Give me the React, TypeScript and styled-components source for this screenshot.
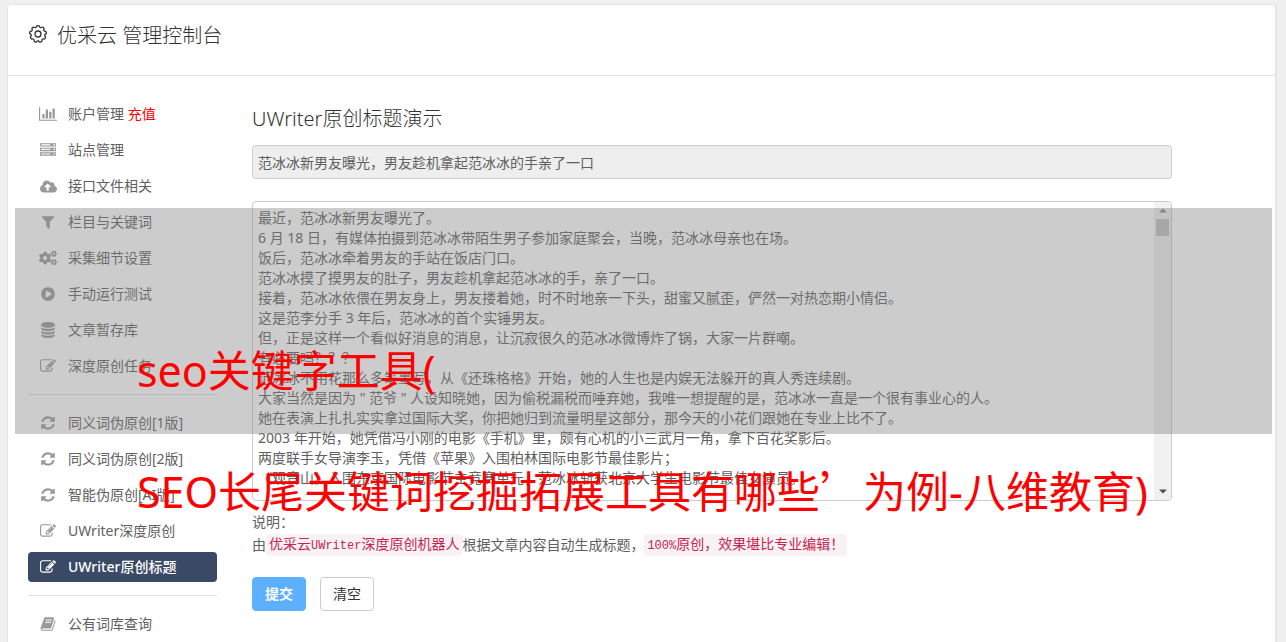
import React from 'react';
import styled, { createGlobalStyle, css } from 'styled-components';
import { FaCloudUploadAlt, FaCogs } from 'react-icons/fa';

const GlobalStyle = createGlobalStyle`
  * { box-sizing: border-box; }
  html { scrollbar-width: none; }
  body {
    margin: 0;
    background: #f0f0f0;
    color: #606060;
    font: 14px/20px "Noto Sans", "Noto Sans CJK SC", sans-serif;
  }
  button, input, textarea { font: inherit; color: inherit; margin: 0; }
`;

const Page = styled.div`
  position: relative;
  min-height: 100vh;
  padding: 4px 10px 0 7px;
  overflow: hidden;
`;

const Card = styled.div`
  background: #fff;
  border: 1px solid #e5e5e5;
  border-radius: 4px;
  box-shadow: 1px 0 0 #e8e8e8;
`;

const Header = styled.header`
  display: flex;
  align-items: flex-start;
  gap: 9px;
  height: 71px;
  padding: 16px 20px;
  border-bottom: 1px solid #e2e2e2;
  color: #333;
  svg { margin-top: 3px; }
`;

const PageTitle = styled.h1`
  margin: 0;
  font-size: 20px;
  line-height: 30px;
  font-weight: 300;
`;

const Body = styled.div`
  display: flex;
  gap: 35px;
  padding: 23px 103px 20px 20px;
`;

const Sidebar = styled.nav`
  flex: 0 0 189px;
`;

const Menu = styled.ul`
  display: flex;
  flex-direction: column;
  gap: 6px;
  margin: 0;
  padding: 0;
  list-style: none;
`;

const Divider = styled.hr`
  height: 1px;
  margin: 13px 0;
  border: 0;
  background: #ddd;
`;

const MenuLink = styled.a<{ $active?: boolean }>`
  display: flex;
  align-items: center;
  height: 30px;
  padding-left: 10px;
  border-radius: 4px;
  color: #606060;
  text-decoration: none;
  white-space: pre;
  ${p => p.$active && css`
    background: #3a4a66;
    color: #fff;
    font-weight: 500;
  `}
`;

const IconBox = styled.span<{ $active?: boolean }>`
  display: flex;
  justify-content: center;
  width: 20px;
  margin-right: 10px;
  color: ${p => (p.$active ? '#fff' : '#999')};
`;

const Recharge = styled.span`
  color: #f00;
`;

const Main = styled.main`
  flex: 1;
  min-width: 0;
  padding-top: 5px;
`;

const SectionTitle = styled.h2`
  margin: 0 0 11px;
  font-size: 20px;
  line-height: 30px;
  font-weight: 300;
  color: #333;
`;

const TitleInput = styled.input`
  display: block;
  width: 100%;
  height: 34px;
  padding: 0 5px;
  border: 1px solid #ccc;
  border-radius: 4px;
  background: #eee;
`;

const ArticleFrame = styled.div`
  display: flex;
  height: 300px;
  margin: 22px 0 9px;
  border: 1px solid #ccc;
  border-radius: 4px;
  overflow: hidden;
`;

const Article = styled.textarea`
  flex: 1;
  min-width: 0;
  padding: 6px 5px;
  border: 0;
  outline: 0;
  resize: none;
  overflow: hidden;
  background: transparent;
`;

const ScrollTrack = styled.div`
  display: flex;
  flex-direction: column;
  align-items: center;
  width: 17px;
  background: #f1f1f1;
`;

const ScrollArrow = styled.svg`
  margin: 6px 0;
`;

const ScrollThumb = styled.div`
  width: 13px;
  height: 17px;
  margin-bottom: auto;
  background: #c1c1c1;
`;

const Note = styled.p`
  display: flex;
  align-items: center;
  height: 23px;
  margin: 0;
  white-space: pre;
`;

const Code = styled.code`
  padding: 0 3px;
  border-radius: 4px;
  background: #f9f2f4;
  color: #c7254e;
  font: 14px/19px "Noto Sans CJK SC", sans-serif;
`;

const Mono = styled.span`
  font-family: "Liberation Mono", monospace;
  font-size: 12px;
`;

const Actions = styled.div`
  display: flex;
  gap: 14px;
  margin-top: 21px;
`;

const Button = styled.button<{ $primary?: boolean }>`
  width: 54px;
  height: 34px;
  padding: 0;
  border: 1px solid ${p => (p.$primary ? '#5cb0ff' : '#ccc')};
  border-radius: 4px;
  background: ${p => (p.$primary ? '#5cb0ff' : '#fff')};
  color: ${p => (p.$primary ? '#fff' : '#333')};
  font-weight: ${p => (p.$primary ? 700 : 400)};
`;

const Shade = styled.div`
  position: absolute;
  top: 208px;
  left: 15px;
  right: 14px;
  height: 226px;
  background: rgba(128, 128, 128, 0.4);
  pointer-events: none;
`;

const Caption = styled.div<{ $top: number }>`
  position: absolute;
  top: ${p => p.$top}px;
  left: 137px;
  color: #f00;
  font-size: 43px;
  line-height: 60px;
  white-space: nowrap;
  pointer-events: none;
`;

const WideQuote = styled.span`
  font-family: "Noto Sans CJK SC", sans-serif;
  line-height: 0;
`;

const paths = {
  chart: 'M640 896v512H384V896h256zm384-512v1024H768V384h256zm1024 1152v128H0V128h128v1408h1920zm-640-896v768h-256V640h256zm384-384v1152h-256V256h256z',
  server: 'M128 1408h1024v-128H128v128zm0-512h1024V768H128v128zm1568 448q0-40-28-68t-68-28-68 28-28 68 28 68 68 28 68-28 28-68zM128 384h1024V256H128v128zm1568 448q0-40-28-68t-68-28-68 28-28 68 28 68 68 28 68-28 28-68zm0-512q0-40-28-68t-68-28-68 28-28 68 28 68 68 28 68-28 28-68zm96 832v384H0v-384h1792zm0-512v384H0V640h1792zm0-512v384H0V128h1792z',
  filter: 'M1595 295q17 41-14 70l-493 493v742q0 42-39 59-13 5-25 5-27 0-45-19l-256-256q-19-19-19-45V858L211 365q-31-29-14-70 17-39 59-39h1280q42 0 59 39z',
  play: 'M896 128q209 0 385.500 103T1561 510.500 1664 896t-103 385.500-279.500 279.500T896 1664t-385.500-103T231 1281.500 128 896t103-385.500T510.500 231 896 128zm384 823q32-18 32-55t-32-55L736 521q-31-19-64-1-32 19-32 56v640q0 37 32 56 16 8 32 8 17 0 32-9z',
  database: 'M896 768q237 0 443-43t325-127v170q0 69-103 128t-280 93.500-385 34.500-385-34.500T231 896 128 768V598q119 84 325 127t443 43zm0 768q237 0 443-43t325-127v170q0 69-103 128t-280 93.500-385 34.500-385-34.500-280-93.500-103-128v-170q119 84 325 127t443 43zm0-384q237 0 443-43t325-127v170q0 69-103 128t-280 93.500-385 34.500-385-34.500-280-93.500-103-128V982q119 84 325 127t443 43zM896 0q208 0 385 34.500t280 93.500 103 128v128q0 69-103 128t-280 93.500T896 640t-385-34.500T231 512 128 384V256q0-69 103-128t280-93.500T896 0z',
  edit: 'M888 1184l116-116-152-152-116 116v56h96v96h56zm440-720q-16-16-33 1L945 815q-17 17-1 33t33-1l350-350q17-17 1-33zm80 594v190q0 119-84.500 203.500T1120 1536H288q-119 0-203.500-84.500T0 1248V416q0-119 84.500-203.500T288 128h832q63 0 117 25 15 7 18 23 3 17-9 29l-49 49q-14 14-32 8-23-6-45-6H288q-66 0-113 47t-47 113v832q0 66 47 113t113 47h832q66 0 113-47t47-113v-126q0-13 9-22l64-64q15-15 35-7t20 29zm-96-738l288 288-672 672H640V992zm444 132l-92 92-288-288 92-92q28-28 68-28t68 28l152 152q28 28 28 68t-28 68z',
  refresh: 'M1639 1056q0 5-1 7-64 268-268 434.500T892 1664q-146 0-282.500-55T366 1452l-129 129q-19 19-45 19t-45-19-19-45v-448q0-26 19-45t45-19h448q26 0 45 19t19 45-19 45l-137 137q71 66 161 102t187 36q134 0 250-65t186-179q11-17 53-117 8-23 30-23h192q13 0 22.500 9.500t9.500 22.500zm25-800v448q0 26-19 45t-45 19h-448q-26 0-45-19t-19-45 19-45l138-138Q1097 384 896 384q-134 0-250 65T460 628q-11 17-53 117-8 23-30 23H178q-13 0-22.500-9.500T146 736v-7q65-268 270-434.500T896 128q146 0 284 55.500T1425 340l130-129q19-19 45-19t45 19 19 45z',
  book: 'M1703 478q40 57 18 129l-275 906q-19 64-76.500 107.500T1247 1664H324q-77 0-148.500-53.500T76 1479q-24-67-2-127 0-4 3-27t4-37q1-8-3-21.500t-3-19.500q2-11 8-21t16.500-23.500T116 1179q23-38 45-91.500t30-91.500q3-10 .5-30t-.5-28q3-11 17-28t17-23q21-36 42-92t25-90q1-9-2.500-32t.5-28q4-13 22-30.500t22-22.500q19-26 42.500-84.500T404 411q1-8-3-25.500t-2-26.500q2-8 9-18t18-23 17-21q8-12 16.500-30.500t15-35 16-36 19.500-32T533.500 140t36-11.500T617 134l-1 3q38-9 51-9h761q74 0 114 56t18 130l-274 906q-36 119-71.500 153.500T1086 1408H217q-27 0-38 15-11 16-1 43 24 70 144 70h923q29 0 56-15.500t35-41.500l300-987q7-22 5-57 38 15 59 43zm-1064 2q-4 13 2 22.500t20 9.500h608q13 0 25.500-9.500T1311 480l21-64q4-13-2-22.500t-20-9.500H702q-13 0-25.500 9.500T660 416zm-83 256q-4 13 2 22.500t20 9.500h608q13 0 25.500-9.500T1228 736l21-64q4-13-2-22.500t-20-9.500H619q-13 0-25.500 9.500T577 672z',
};

type GlyphName = keyof typeof paths | 'cloud' | 'cogs';

function Glyph({ name }: { name: GlyphName }) {
  if (name === 'cloud') return <FaCloudUploadAlt size={17} />;
  if (name === 'cogs') return <FaCogs size={18} />;
  const wide = name === 'chart';
  return (
    <svg width={wide ? 18 : 16} height={16} viewBox={`0 0 ${wide ? 2048 : 1792} 1792`} fill="currentColor">
      <path d={paths[name]} />
    </svg>
  );
}

/* Scalloped outline cog: nine rounded teeth around a small ring. */
function CogOutline() {
  const teeth = 9;
  const step = (Math.PI * 2) / teeth;
  const at = (r: number, a: number) => `${(10 + r * Math.sin(a)).toFixed(2)} ${(10 - r * Math.cos(a)).toFixed(2)}`;
  let d = `M${at(8.2, -step * 0.2)}`;
  for (let i = 0; i < teeth; i++) {
    const a = i * step;
    d += `Q${at(8.8, a)} ${at(8.2, a + step * 0.2)}Q${at(5.6, a + step * 0.5)} ${at(8.2, a + step * 0.8)}`;
  }
  return (
    <svg width="20" height="20" viewBox="0 0 20 20" fill="none" stroke="currentColor" strokeWidth="1.3" strokeLinejoin="round">
      <path d={d + 'Z'} />
      <circle cx="10" cy="10" r="3" />
    </svg>
  );
}

interface Item {
  icon: GlyphName;
  label: string;
  extra?: string;
  active?: boolean;
}

const groups: Item[][] = [
  [
    { icon: 'chart', label: '账户管理 ', extra: '充值' },
    { icon: 'server', label: '站点管理' },
    { icon: 'cloud', label: '接口文件相关' },
    { icon: 'filter', label: '栏目与关键词' },
    { icon: 'cogs', label: '采集细节设置' },
    { icon: 'play', label: '手动运行测试' },
    { icon: 'database', label: '文章暂存库' },
    { icon: 'edit', label: '深度原创任务' },
  ],
  [
    { icon: 'refresh', label: '同义词伪原创[1版]' },
    { icon: 'refresh', label: '同义词伪原创[2版]' },
    { icon: 'refresh', label: '智能伪原创[AI版]' },
    { icon: 'edit', label: 'UWriter深度原创' },
    { icon: 'edit', label: 'UWriter原创标题', active: true },
  ],
  [{ icon: 'book', label: '公有词库查询' }],
];

const article = `最近，范冰冰新男友曝光了。
6 月 18 日，有媒体拍摄到范冰冰带陌生男子参加家庭聚会，当晚，范冰冰母亲也在场。
饭后，范冰冰牵着男友的手站在饭店门口。
范冰冰摸了摸男友的肚子，男友趁机拿起范冰冰的手，亲了一口。
接着，范冰冰依偎在男友身上，男友搂着她，时不时地亲一下头，甜蜜又腻歪，俨然一对热恋期小情侣。
这是范李分手 3 年后，范冰冰的首个实锤男友。
但，正是这样一个看似好消息的消息，让沉寂很久的范冰冰微博炸了锅，大家一片群嘲。
有必要吗？？？
范冰冰不用花那么多笔墨写，从《还珠格格》开始，她的人生也是内娱无法躲开的真人秀连续剧。
大家当然是因为 " 范爷 " 人设知晓她，因为偷税漏税而唾弃她，我唯一想提醒的是，范冰冰一直是一个很有事业心的人。
她在表演上扎扎实实拿过国际大奖，你把她归到流量明星这部分，那今天的小花们跟她在专业上比不了。
2003 年开始，她凭借冯小刚的电影《手机》里，颇有心机的小三武月一角，拿下百花奖影后。
两度联手女导演李玉，凭借《苹果》入围柏林国际电影节最佳影片；
《观音山》入围东京国际电影节主竞赛单元，范冰冰斩获北京大学生电影节最佳女演员。`;

export default function App() {
  return (
    <Page lang="zh-CN">
      <GlobalStyle />
      <Card>
        <Header>
          <CogOutline />
          <PageTitle>优采云 管理控制台</PageTitle>
        </Header>
        <Body>
          <Sidebar>
            {groups.map((items, g) => (
              <React.Fragment key={g}>
                {g > 0 && <Divider />}
                <Menu>
                  {items.map(item => (
                    <li key={item.label}>
                      <MenuLink href="#" $active={item.active}>
                        <IconBox $active={item.active}><Glyph name={item.icon} /></IconBox>
                        {item.label}
                        {item.extra && <Recharge>{item.extra}</Recharge>}
                      </MenuLink>
                    </li>
                  ))}
                </Menu>
              </React.Fragment>
            ))}
          </Sidebar>
          <Main>
            <SectionTitle>UWriter原创标题演示</SectionTitle>
            <TitleInput aria-label="标题" readOnly value="范冰冰新男友曝光，男友趁机拿起范冰冰的手亲了一口" />
            <ArticleFrame>
              <Article aria-label="文章内容" defaultValue={article} spellCheck={false} />
              <ScrollTrack aria-hidden="true">
                <ScrollArrow width="8" height="5" viewBox="0 0 8 5"><path d="M0 4.500L4 .5l4 4z" fill="#8a8a8a" /></ScrollArrow>
                <ScrollThumb />
                <ScrollArrow width="8" height="5" viewBox="0 0 8 5"><path d="M0 .5h8l-4 4z" fill="#505050" /></ScrollArrow>
              </ScrollTrack>
            </ArticleFrame>
            <Note>说明：</Note>
            <Note>
              由
              <Code>优采云<Mono>UWriter</Mono>深度原创机器人</Code>
              根据文章内容自动生成标题，
              <Code><Mono>100%</Mono>原创，效果堪比专业编辑！</Code>
            </Note>
            <Actions>
              <Button type="button" $primary>提交</Button>
              <Button type="button">清空</Button>
            </Actions>
          </Main>
        </Body>
      </Card>
      <Shade />
      <Caption $top={341}>seo关键字工具(</Caption>
      <Caption $top={462}>SEO长尾关键词挖掘拓展工具有哪些<WideQuote>’</WideQuote>为例-八维教育)</Caption>
    </Page>
  );
}
